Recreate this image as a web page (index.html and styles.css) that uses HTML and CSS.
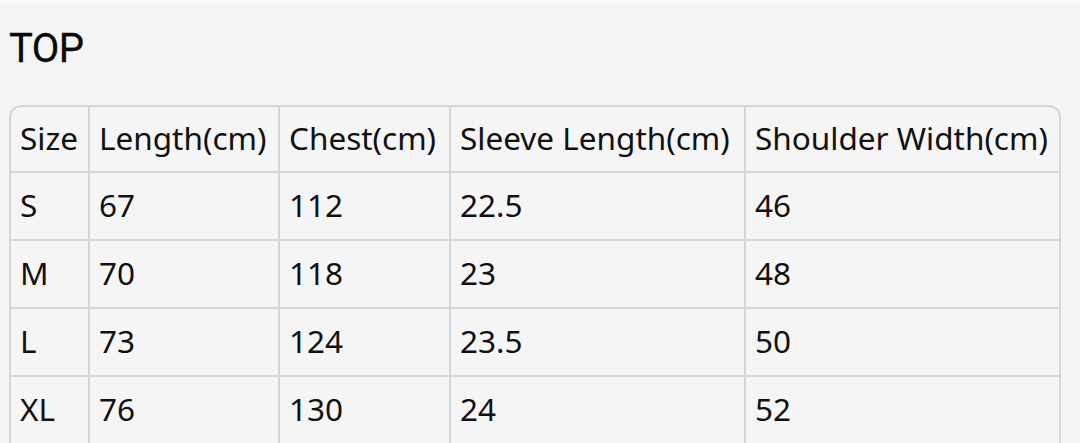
FILE: index.html
```html
<!DOCTYPE html>
<html lang="en">
<head>
<meta charset="utf-8">
<title>TOP size chart</title>
<link rel="stylesheet" href="styles.css">
</head>
<body>
<div class="page">
  <h1 class="title">TOP</h1>
  <div class="table-wrap">
    <table class="size-table">
      <colgroup>
        <col class="c-size">
        <col class="c-length">
        <col class="c-chest">
        <col class="c-sleeve">
        <col class="c-shoulder">
      </colgroup>
      <thead>
        <tr>
          <th>Size</th>
          <th>Length(cm)</th>
          <th>Chest(cm)</th>
          <th>Sleeve Length(cm)</th>
          <th>Shoulder Width(cm)</th>
        </tr>
      </thead>
      <tbody>
        <tr><td>S</td><td>67</td><td>112</td><td>22.5</td><td>46</td></tr>
        <tr><td>M</td><td>70</td><td>118</td><td>23</td><td>48</td></tr>
        <tr><td>L</td><td>73</td><td>124</td><td>23.5</td><td>50</td></tr>
        <tr><td>XL</td><td>76</td><td>130</td><td>24</td><td>52</td></tr>
      </tbody>
    </table>
  </div>
</div>
</body>
</html>
```
FILE: styles.css
```css
html, body {
  margin: 0;
  padding: 0;
  background: #f5f5f5;
}
body {
  border-top: 3px solid #fbfbfb;
  font-family: "Noto Sans", Roboto, "Liberation Sans", sans-serif;
  color: #111;
}
.page {
  padding: 22px 0 0 9px;
}
.title {
  margin: 0;
  font-family: Roboto, "Liberation Sans", sans-serif;
  font-size: 40px;
  line-height: 48px;
  font-weight: 400;
  letter-spacing: -0.5px;
  color: #0a0a0a;
  -webkit-text-stroke: 0.3px #0a0a0a;
}
.table-wrap {
  margin-top: 32px;
  width: 1048px;
  border: 2px solid #d6d6d6;
  border-bottom: none;
  border-radius: 12px 12px 0 0;
  overflow: hidden;
}
.size-table {
  width: 100%;
  table-layout: fixed;
  border-collapse: separate;
  border-spacing: 0;
  font-size: 31.5px;
}
.c-size { width: 79px; }
.c-length { width: 190px; }
.c-chest { width: 171px; }
.c-sleeve { width: 295px; }
.size-table th,
.size-table td {
  text-align: left;
  font-weight: 400;
  padding: 0 0 3px 9px;
  white-space: nowrap;
  border-right: 2px solid #d6d6d6;
  border-bottom: 2px solid #d6d6d6;
}
.size-table th:last-child,
.size-table td:last-child {
  border-right: none;
}
.size-table thead tr { height: 66px; }
.size-table tbody tr { height: 68px; }
```
